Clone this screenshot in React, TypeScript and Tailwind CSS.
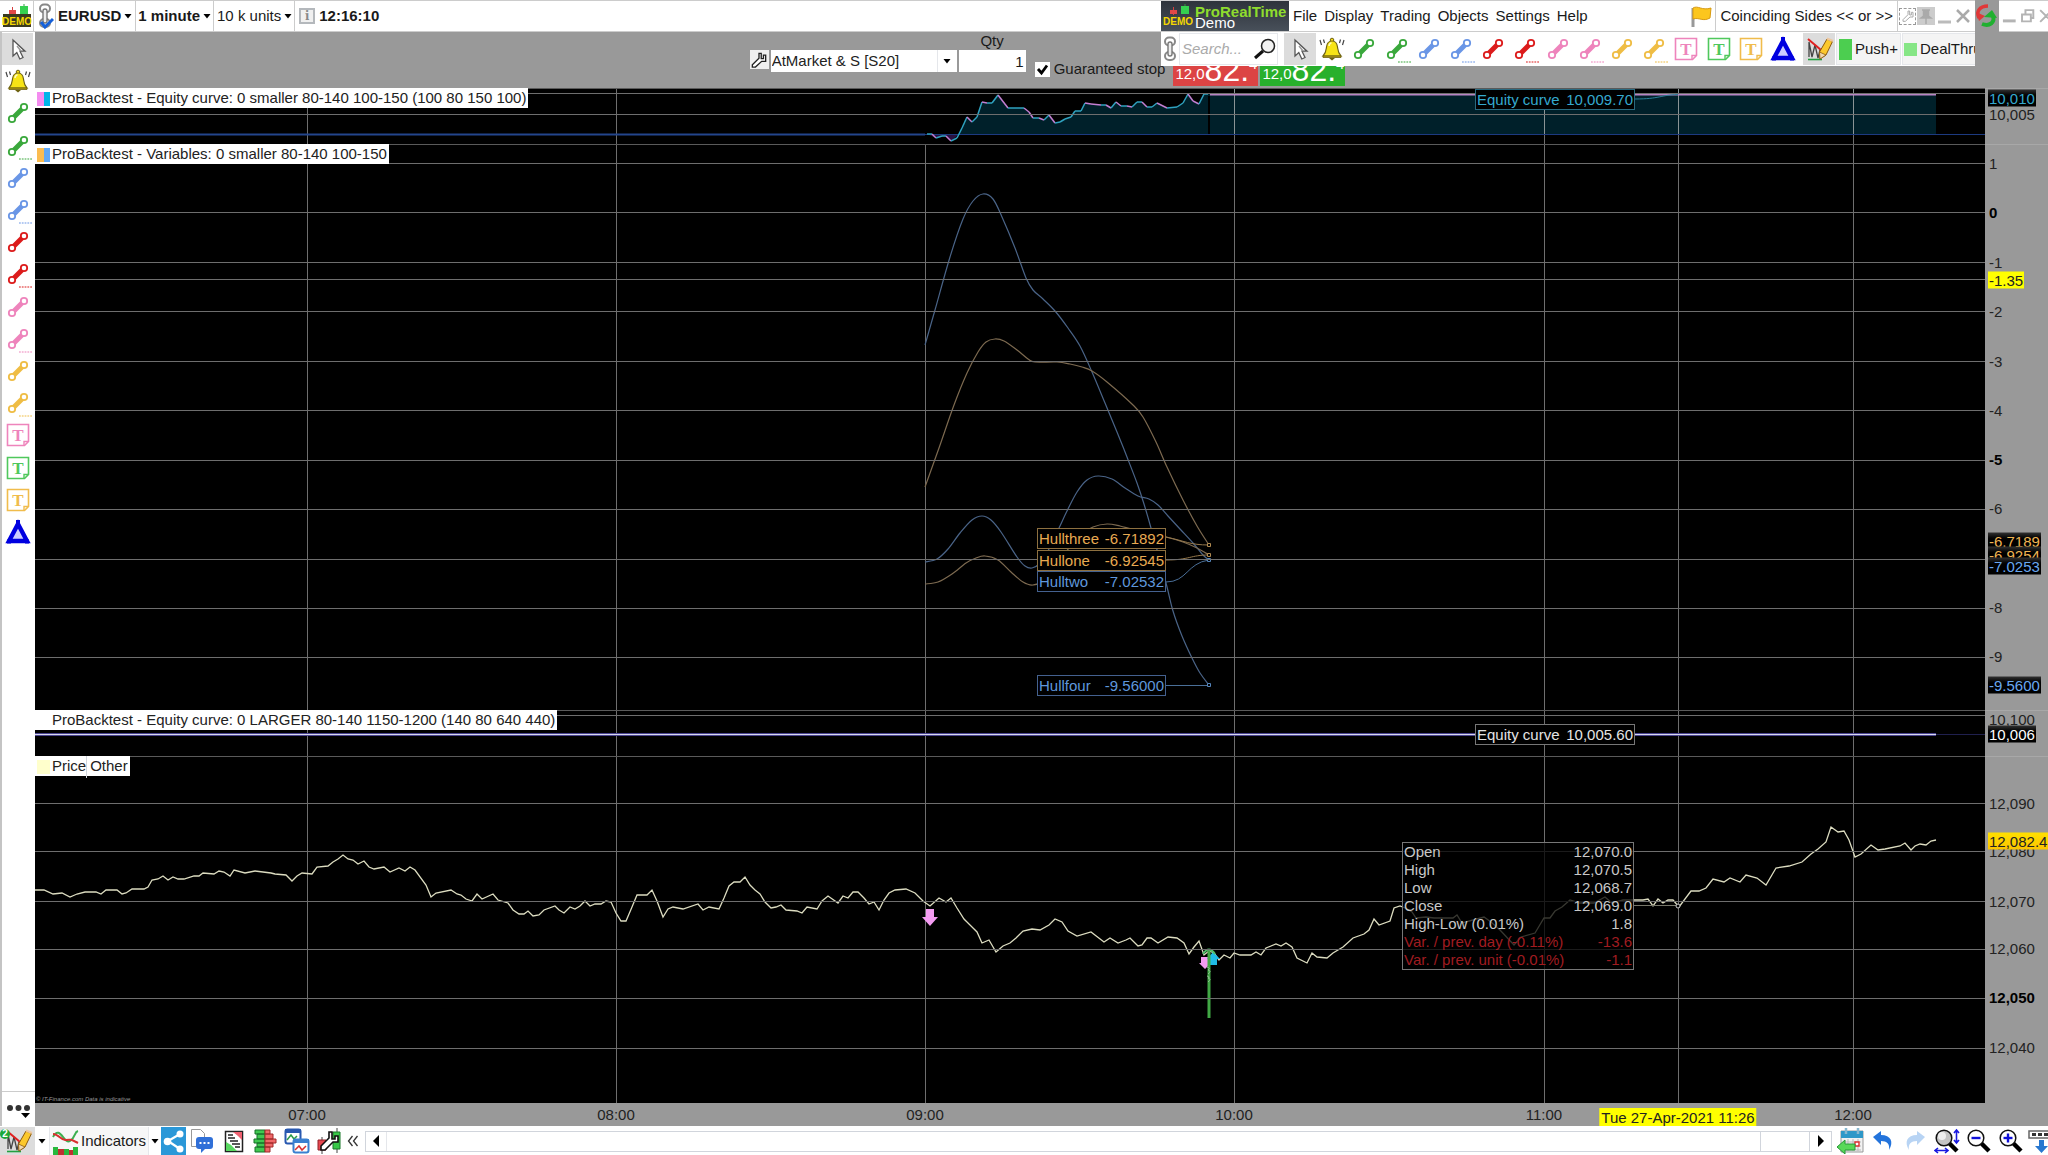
import React from "react";

const W = 1950;
const HOURS = [
  { label: "07:00", x: 272 },
  { label: "08:00", x: 581 },
  { label: "09:00", x: 890 },
  { label: "10:00", x: 1199 },
  { label: "11:00", x: 1509 },
  { label: "12:00", x: 1818 },
];
const CURSOR_X = 1643;

const PRICE =
  "0,134 9,134 18,138 27,137 35,141 42,138 50,136 61,136 66,138 71,134 82,134 87,138 91,137 97,133 109,133 113,131 117,124 123,123 128,120 133,124 138,121 143,123 149,123 159,120 164,120 168,117 179,118 184,115 189,116 195,120 199,114 210,117 220,115 236,117 240,118 251,119 257,125 262,120 267,117 277,118 282,111 293,110 298,106 303,103 308,99 313,103 318,104 323,108 329,105 334,111 339,113 349,111 355,116 364,112 370,115 375,111 380,114 391,129 396,141 401,137 416,134 422,138 426,139 431,143 437,145 442,138 447,143 458,138 463,144 473,147 478,154 484,158 489,158 493,155 498,160 504,159 509,154 520,150 524,154 529,157 535,151 540,153 545,150 550,145 555,150 560,148 566,148 571,145 576,146 581,157 586,165 591,165 597,151 602,139 612,139 617,134 622,145 628,161 633,153 638,151 648,153 663,148 668,154 674,151 684,153 689,142 694,130 699,126 705,126 710,121 715,129 720,134 725,138 730,146 736,152 741,151 746,149 751,154 762,155 767,157 772,151 782,153 787,145 793,140 803,147 808,140 813,142 818,136 823,136 829,142 834,148 839,146 844,154 849,144 854,137 860,134 871,133 880,137 888,145 895,150 904,142 911,146 916,142 922,152 929,163 935,169 942,176 947,187 954,184 961,196 968,190 975,187 981,182 988,175 997,173 1005,174 1014,169 1020,163 1027,166 1033,175 1042,180 1056,176 1069,186 1075,182 1083,187 1091,184 1095,182 1103,190 1107,189 1112,182 1116,182 1123,187 1133,181 1142,182 1149,187 1154,198 1159,191 1164,185 1169,199 1174,195 1179,197 1184,204 1189,199 1195,202 1199,197 1205,199 1216,199 1221,196 1226,199 1231,192 1241,188 1246,190 1251,187 1257,191 1262,202 1272,207 1277,197 1282,201 1292,202 1298,197 1308,191 1318,182 1329,178 1334,174 1339,163 1344,169 1355,165 1359,152 1365,150 1370,152 1377,156 1381,162 1391,161 1399,162 1418,162 1422,159 1427,167 1449,161 1456,166 1465,174 1479,189 1486,181 1500,177 1509,162 1515,162 1520,155 1527,151 1535,144 1545,147 1559,147 1570,141 1577,147 1588,144 1599,144 1608,144 1613,143 1618,150 1623,143 1628,147 1633,144 1638,144 1644,151 1656,135 1664,135 1671,132 1678,123 1689,126 1695,122 1705,126 1711,119 1722,122 1731,129 1741,112 1754,110 1767,106 1776,98 1783,93 1791,86 1796,71 1803,76 1809,75 1814,84 1820,101 1826,98 1836,89 1843,94 1850,93 1865,90 1870,87 1876,94 1880,90 1885,88 1891,89 1896,85 1901,84";

const EQUITY: number[][] = [
  [892, 46], [897, 46], [901, 50], [907, 48], [911, 48], [916, 53], [922, 50], [927, 40], [932, 29], [937, 34],
  [942, 29], [947, 14], [952, 15], [957, 15], [963, 7], [973, 20], [989, 20], [994, 24], [998, 30], [1004, 30],
  [1009, 32], [1014, 27], [1020, 35], [1025, 34], [1030, 31], [1036, 29], [1040, 23], [1046, 23], [1050, 15], [1056, 16],
  [1066, 17], [1071, 17], [1076, 20], [1081, 14], [1086, 18], [1092, 18], [1097, 19], [1102, 14], [1107, 14], [1112, 19],
  [1117, 19], [1122, 15], [1132, 20], [1142, 19], [1148, 15], [1153, 6], [1158, 13], [1164, 16], [1169, 6], [1173, 6],
];

const HULLS: { color: string; pts: number[][] }[] = [
  {
    color: "#4a6488",
    pts: [[890, 201], [900, 166], [915, 113], [928, 75], [938, 57], [948, 50], [958, 55], [967, 73], [980, 104], [991, 134], [998, 146], [1008, 155], [1020, 167], [1033, 184], [1045, 202], [1057, 228], [1070, 259], [1082, 288], [1092, 313], [1102, 339], [1109, 360], [1116, 384], [1131, 439], [1138, 467], [1147, 492], [1157, 514], [1165, 529], [1174, 541]],
  },
  {
    color: "#7d6a50",
    pts: [[890, 343], [904, 304], [919, 261], [932, 229], [943, 208], [951, 198], [960, 195], [969, 197], [982, 206], [993, 215], [1000, 218], [1022, 218], [1035, 220], [1047, 223], [1057, 227], [1072, 238], [1098, 261], [1108, 273], [1121, 298], [1132, 323], [1148, 356], [1162, 382], [1174, 401]],
  },
  {
    color: "#4a6488",
    pts: [[890, 418], [902, 415], [913, 405], [925, 389], [937, 376], [947, 372], [956, 376], [966, 388], [982, 413], [990, 422], [997, 424], [1004, 420], [1014, 405], [1024, 384], [1032, 367], [1042, 348], [1052, 336], [1063, 332], [1077, 335], [1090, 344], [1103, 352], [1114, 355], [1123, 361], [1133, 372], [1145, 385], [1158, 399], [1168, 411], [1174, 416]],
  },
  {
    color: "#7d6a50",
    pts: [[890, 440], [903, 438], [917, 430], [931, 419], [941, 414], [950, 412], [963, 416], [976, 428], [988, 438], [998, 441], [1010, 435], [1030, 409], [1045, 391], [1058, 383], [1072, 380], [1085, 382], [1100, 386], [1131, 393], [1148, 398], [1162, 404], [1174, 411]],
  },
];

// catmull-rom to bezier
const smooth = (p: number[][]) => {
  let d = `M${p[0][0]} ${p[0][1]}`;
  for (let i = 0; i < p.length - 1; i++) {
    const a = p[i - 1] || p[i];
    const b = p[i];
    const c = p[i + 1];
    const e = p[i + 2] || c;
    d += `C${b[0] + (c[0] - a[0]) / 6} ${b[1] + (c[1] - a[1]) / 6} ${c[0] - (e[0] - b[0]) / 6} ${c[1] - (e[1] - b[1]) / 6} ${c[0]} ${c[1]}`;
  }
  return d;
};

/* ---------- icons ---------- */

const Bone = ({ color, dots }: { color: string; dots?: boolean }) => (
  <svg viewBox="0 0 32 32" className="size-8 shrink-0">
    <path d="M10 22L22 10" stroke={color} strokeWidth="5" />
    <circle cx="10" cy="22" r="3.2" fill="#fff" stroke={color} strokeWidth="1.8" />
    <circle cx="22" cy="10" r="3.2" fill="#fff" stroke={color} strokeWidth="1.8" />
    {dots && <path d="M17 29h13" stroke={color} strokeWidth="1.2" strokeDasharray="1.8 1" />}
  </svg>
);

const Note = ({ color }: { color: string }) => (
  <svg viewBox="0 0 32 32" className="size-8 shrink-0">
    <path d="M5.500 5.500h21v17l-4 4h-17z" fill="#fff" stroke={color} strokeWidth="1.6" />
    <path d="M26 22.500h-4v4" fill="none" stroke={color} strokeWidth="1.4" />
    <text x="16" y="22" textAnchor="middle" fontFamily="Liberation Serif, serif" fontWeight="bold" fontSize="17" fill={color}>T</text>
  </svg>
);

const Arrow = () => (
  <svg viewBox="0 0 32 32" className="size-8 shrink-0">
    <path d="M11 7v16l3.800-3.500 3 6.500 3.200-1.500-3-6.300h5z" fill="#fff" stroke="#555" strokeWidth="1.300" />
    <path d="M15 13l4 5" stroke="#999" strokeWidth="1.500" />
  </svg>
);

const Bell = () => (
  <svg viewBox="0 0 32 32" className="size-8 shrink-0">
    <circle cx="16" cy="7" r="1.800" fill="#f4d91c" stroke="#6e6210" />
    <path d="M7 23c3-3 3-5 3.500-9 .5-4 3-6 5.500-6s5 2 5.500 6c.5 4 .5 6 3.500 9z" fill="#f7e416" stroke="#6e6210" strokeWidth="1.200" />
    <path d="M7 23h18v1.500H7z" fill="#b79f10" stroke="#6e6210" strokeWidth=".8" />
    <path d="M13 25h6l-3 2.500z" fill="#6e6210" />
    <path d="M13 13c.3-2 1.300-3 2.500-3" stroke="#fffbc0" strokeWidth="1.600" fill="none" />
    <path d="M4 7l1.500 5M7.500 6.500L8.500 10M28 7l-1.500 5M24.500 6.500L23.500 10" stroke="#444" strokeWidth="1.200" />
  </svg>
);

const Triangle = () => (
  <svg viewBox="0 0 32 32" className="size-8 shrink-0">
    <path d="M16 8L25 25H7z" fill="#ccccff" stroke="#0000e0" strokeWidth="4.400" />
    <path d="M14 4h4v4h-4zM5 23.500h4v4H5zM23 23.500h4v4h-4z" fill="#0000e0" />
  </svg>
);

const Pencil = () => (
  <svg viewBox="0 0 32 32" className="size-8 shrink-0">
    <path d="M6 24V9l3 15 3-12 3 13 2-8" fill="none" stroke="#444" strokeWidth="1.300" />
    <path d="M5 26.500h14" stroke="#22a040" strokeWidth="1.600" />
    <path d="M5 6l13 11" stroke="#e02020" strokeWidth="2" />
    <path d="M24 6l5.500 2.500L23 22l-6 4-.5-7z" fill="#fcc82c" stroke="#8a5a10" />
    <path d="M16.500 19l6.500 3-6 4z" fill="#f0d8b0" stroke="#8a5a10" strokeWidth=".8" />
    <path d="M24 5.500l6 2.500" stroke="#eec8a0" strokeWidth="2" />
  </svg>
);

const Chain = ({ check }: { check?: boolean }) => (
  <svg viewBox="0 0 18 28" className="h-7 w-[18px] shrink-0">
    <g fill="none" stroke="#888" strokeWidth="2">
      <rect x="4" y="2.500" width="10" height="8" rx="4" />
      <rect x="4" y="17" width="10" height="8" rx="4" />
    </g>
    <rect x="7" y="7" width="4" height="14" rx="2" fill="#eee" stroke="#777" strokeWidth="1.400" />
    {check && <path d="M5 20l4 5 8-8" fill="none" stroke="#1560d8" strokeWidth="3" />}
  </svg>
);

const DemoLogo = ({ box }: { box?: boolean }) => (
  <svg viewBox="0 0 30 24" className="h-6 w-[30px] shrink-0">
    <path d="M10.500 3v8" stroke="#d84040" />
    <path d="M7 6h7v4H7z" fill="#e04848" />
    <path d="M22 0v10" stroke="#30a040" />
    <path d="M18 2h8v8h-8z" fill="#35d050" />
    {box && <path d="M1 10h28v13H1z" fill="#3a3a20" />}
    <text x="15" y="21" textAnchor="middle" fontFamily="Liberation Sans, sans-serif" fontWeight="bold" fontSize="10" fill="#f5d800">DEMO</text>
  </svg>
);

const Caret = () => (
  <svg viewBox="0 0 8 5" className="h-[5px] w-2 shrink-0">
    <path d="M.5 0h7L4 4.500z" fill="#000" />
  </svg>
);

const Wrench = ({ className, stroke = "#222" }: { className?: string; stroke?: string }) => (
  <svg viewBox="0 0 18 18" className={className}>
    <path d="M9 1.500v5.500l-7.500 7.500v2.500h3.500L12 10.500h4.500V3.500h-2.500v4h-2.500v-6z" fill="#fff" stroke={stroke} strokeWidth="1.500" />
  </svg>
);

const Glass = ({ sign }: { sign?: "plus" | "minus" }) => (
  <svg viewBox="0 0 26 26" className="size-[26px] shrink-0">
    <path d="M15 15l8 8" stroke="#000" strokeWidth="4.500" />
    <circle cx="10" cy="10" r="7.800" fill={sign ? "#fff" : "#c4c4c4"} stroke="#111" strokeWidth="1.500" />
    {sign && <path d="M5.500 10h9" stroke="#1010d8" strokeWidth="2.400" />}
    {sign === "plus" && <path d="M10 5.500v9" stroke="#1010d8" strokeWidth="2.400" />}
    {!sign && (
      <>
        <circle cx="8" cy="8" r="4" fill="#eee" />
        <path d="M22.500 3v11M20 5l2.500-3L25 5M20 12l2.500 3 2.500-3M2 22.500h11M4 20l-3 2.500L4 25M11 20l3 2.500-3 2.500" fill="none" stroke="#1818e0" strokeWidth="1.600" />
      </>
    )}
  </svg>
);

const Search = () => (
  <svg viewBox="0 0 24 24" className="size-6 shrink-0">
    <path d="M10 14l-8 7" stroke="#111" strokeWidth="3" />
    <circle cx="15" cy="9" r="6.500" fill="#f2f2f2" stroke="#222" strokeWidth="1.500" />
  </svg>
);

const TOOLS = [
  { name: "Select", icon: <Arrow /> },
  { name: "Alert", icon: <Bell /> },
  { name: "Green line", icon: <Bone color="#3aa83c" /> },
  { name: "Green segment", icon: <Bone color="#3aa83c" dots /> },
  { name: "Blue line", icon: <Bone color="#6a96e6" /> },
  { name: "Blue segment", icon: <Bone color="#6a96e6" dots /> },
  { name: "Red line", icon: <Bone color="#dc1c1c" /> },
  { name: "Red segment", icon: <Bone color="#dc1c1c" dots /> },
  { name: "Pink line", icon: <Bone color="#ee84bc" /> },
  { name: "Pink segment", icon: <Bone color="#ee84bc" dots /> },
  { name: "Orange line", icon: <Bone color="#efbd45" /> },
  { name: "Orange segment", icon: <Bone color="#efbd45" dots /> },
  { name: "Pink note", icon: <Note color="#ee84bc" /> },
  { name: "Green note", icon: <Note color="#4fc85c" /> },
  { name: "Orange note", icon: <Note color="#f0bc4c" /> },
  { name: "Triangle", icon: <Triangle /> },
];

const Tools = () => (
  <>
    {TOOLS.map((t, i) => (
      <button key={t.name} aria-label={t.name} className={`flex flex-1 items-center justify-center ${i === 0 ? "bg-[#dcdcdc]" : ""}`}>
        {t.icon}
      </button>
    ))}
  </>
);

/* ---------- chart ---------- */

type Tick = { y: number; label?: string; bold?: boolean; at?: number };
type Tag = { y: number; label: string; style: string };

const TAG = "bg-linear-to-b from-[#333] via-black to-black";

const Pane = ({ h, ticks, tags, title, svg, from9, children }: {
  h: number;
  ticks: Tick[];
  tags: Tag[];
  title: React.ReactNode;
  svg: React.ReactNode;
  from9?: boolean;
  children?: React.ReactNode;
}) => (
  <section className="flex min-h-0 basis-0" style={{ flexGrow: h }}>
    <div className="relative min-w-0 flex-1 overflow-hidden bg-black">
      <svg viewBox={`0 0 ${W} ${h}`} preserveAspectRatio="none" className="absolute inset-0 size-full">
        {HOURS.map((t) => (
          <path key={t.x} d={`M${t.x + 0.5} 0V${h}`} stroke={from9 && t.x === 890 ? "none" : "#6e6e6e"} />
        ))}
        <path d={`M${CURSOR_X + 0.5} 0V${h}`} stroke="#6e6e6e" />
        {svg}
        {ticks.map((t) => (
          <path key={t.y} d={`M0 ${t.y + 0.5}H${W}`} stroke="#6e6e6e" />
        ))}
        <path d={`M0 .5H${W}`} stroke="#5a5a5a" />
      </svg>
      <div className="absolute left-0 top-0 flex h-5 items-center bg-white pt-px pr-0.5 text-[#222]">{title}</div>
      {children}
    </div>
    <div className="relative w-[63px] shrink-0 border-t border-[#a8a8a8] bg-[#999]">
      {ticks.map((t) =>
        t.label ? (
          <span key={t.y} className={`absolute left-1 -mt-px -translate-y-1/2 leading-[17px] ${t.bold ? "font-bold text-black" : "text-[#222]"}`} style={{ top: `${((t.at ?? t.y) / h) * 100}%` }}>
            {t.label}
          </span>
        ) : null
      )}
      {tags.map((t) => (
        <span key={t.label} className={`absolute left-[3px] -translate-y-1/2 pl-px pr-px leading-[17px] ${t.style}`} style={{ top: `${(t.y / h) * 100}%` }}>
          {t.label}
        </span>
      ))}
    </div>
  </section>
);

const Box = ({ x, y, h, w, style, name, value }: { x: number; y: number; h: number; w: string; style: string; name: string; value: string }) => (
  <div className={`absolute flex h-[21px] items-center justify-between border bg-black px-px pt-px ${w} ${style}`} style={{ left: `${(x / W) * 100}%`, top: `${(y / h) * 100}%` }}>
    <span>{name}</span>
    <span>{value}</span>
  </div>
);

const Swatch = ({ a, b }: { a: string; b: string }) => (
  <span className="mx-0.5 flex h-[14px] w-[13px] shrink-0">
    <i className={`flex-1 ${a}`} />
    <i className={`flex-1 ${b}`} />
  </span>
);

const area = `M924 46.500${EQUITY.slice(7).map((p) => `L${p[0]} ${p[1]}`).join("")}L1901 7V46.500Z`;

const QUOTE = [
  ["Open", "12,070.0"],
  ["High", "12,070.5"],
  ["Low", "12,068.7"],
  ["Close", "12,069.0"],
  ["High-Low (0.01%)", "1.8"],
  ["Var. / prev. day (-0.11%)", "-13.6"],
  ["Var. / prev. unit (-0.01%)", "-1.1"],
];

const Charts = () => (
  <div className="flex min-h-0 flex-1 flex-col">
    <Pane
      h={56}
      from9
      ticks={[{ y: 5 }, { y: 26, label: "10,005" }]}
      tags={[{ y: 9, label: "10,010", style: `${TAG} text-[#35a9cf]` }]}
      title={<><Swatch a="bg-[#f48cf0]" b="bg-[#00b4e8]" /><span>ProBacktest - Equity curve: 0 smaller 80-140 100-150 (100 80 150 100)</span></>}
      svg={
        <>
          <path d={area} fill="#00202a" />
          <path d="M892 46l9 4 10-2 5 5 8-7z" fill="#2a1040" />
          <path d="M1199.500 0V46M1509.500 0V46M1643.500 0V46M1818.500 0V46" stroke="#8a9496" />
          <path d="M1174 8V46" stroke="#000" strokeWidth="2" />
          <path d={`M0 46.500H${W}`} stroke="#1d3a80" />
          <path d="M0 46.500H890" stroke="#23458c" strokeWidth="2" />
          {EQUITY.slice(1).map((p, i) => (
            <path key={i} d={`M${EQUITY[i][0]} ${EQUITY[i][1]}L${p[0]} ${p[1]}`} stroke={p[1] > EQUITY[i][1] ? "#c47fd2" : "#2fa2bf"} strokeWidth="1.500" />
          ))}
          <path d="M1175 6.500H1901" stroke="#b884c4" strokeWidth="2" />
          <path d="M1600 11C1625 11 1625 7 1643 6.500" fill="none" stroke="#2a7f98" />
        </>
      }
    >
      <Box x={1440} y={1} h={56} w="w-[160px]" style="border-[#2a6a80] text-[#35a9cf]" name="Equity curve" value="10,009.70" />
    </Pane>

    <Pane
      h={566}
      ticks={[
        { y: 19, label: "1" },
        { y: 68, label: "0", bold: true },
        { y: 118, label: "-1" },
        { y: 135 },
        { y: 167, label: "-2" },
        { y: 217, label: "-3" },
        { y: 266, label: "-4" },
        { y: 316, label: "-5", bold: true },
        { y: 365, label: "-6" },
        { y: 415 },
        { y: 464, label: "-8" },
        { y: 513, label: "-9" },
      ]}
      tags={[
        { y: 135, label: "-1.35", style: "bg-[#ffff00] text-[#222]" },
        { y: 397, label: "-6.7189", style: `${TAG} text-[#f0b654]` },
        { y: 411, label: "-6.9254", style: `${TAG} text-[#f0b654]` },
        { y: 422, label: "-7.0253", style: `${TAG} text-[#6aa8f0]` },
        { y: 541, label: "-9.5600", style: `${TAG} text-[#6aa8f0]` },
      ]}
      title={<><Swatch a="bg-[#fbbc50]" b="bg-[#62a8f4]" /><span>ProBacktest - Variables: 0 smaller 80-140 100-150</span></>}
      svg={
        <g fill="none">
          {HULLS.map((s, i) => (
            <path key={i} d={smooth(s.pts)} stroke={s.color} strokeWidth="1.200" />
          ))}
          <path d="M1131 393C1150 397 1155 401 1174 401M1131 416C1155 416 1155 411 1174 411" stroke="#96794c" />
          <path d="M1131 438C1152 438 1152 419 1174 416M1131 541.500H1174" stroke="#4a6f98" />
          <path d="M1172.500 399.500h3v3h-3zM1172.500 409.500h3v3h-3z" fill="#000" stroke="#b08a50" />
          <path d="M1172.500 414.500h3v3h-3zM1172.500 539.500h3v3h-3z" fill="#000" stroke="#5585bb" />
        </g>
      }
    >
      <Box x={1002} y={384} h={566} w="w-[129px]" style="border-[#8d7040] text-[#e8aa52]" name="Hullthree" value="-6.71892" />
      <Box x={1002} y={406} h={566} w="w-[129px]" style="border-[#8d7040] text-[#e8aa52]" name="Hullone" value="-6.92545" />
      <Box x={1002} y={427} h={566} w="w-[129px]" style="border-[#44618f] text-[#5f97dc]" name="Hulltwo" value="-7.02532" />
      <Box x={1002} y={531} h={566} w="w-[129px]" style="border-[#44618f] text-[#5f97dc]" name="Hullfour" value="-9.56000" />
    </Pane>

    <Pane
      h={46}
      ticks={[{ y: 5, label: "10,100", at: 9 }]}
      tags={[{ y: 24, label: "10,006", style: `${TAG} text-white` }]}
      title={<><Swatch a="bg-white" b="bg-white" /><span>ProBacktest - Equity curve: 0 LARGER 80-140 1150-1200 (140 80 640 440)</span></>}
      svg={
        <>
          <path d={`M0 24.500H${W}`} stroke="#20204e" strokeWidth="1" />
          <path d="M0 24.500H1901" stroke="#4a4490" strokeWidth="3" />
          <path d="M0 24.500H1901" stroke="#d8d8ec" strokeWidth="1" />
        </>
      }
    >
      <Box x={1440} y={14} h={46} w="w-[160px]" style="border-[#777] text-[#e4e4e4]" name="Equity curve" value="10,005.60" />
    </Pane>

    <Pane
      h={347}
      ticks={[
        { y: 47, label: "12,090" },
        { y: 95, label: "12,080" },
        { y: 145, label: "12,070" },
        { y: 193, label: "12,060" },
        { y: 242, label: "12,050", bold: true },
        { y: 292, label: "12,040" },
      ]}
      tags={[{ y: 84, label: "12,082.4", style: "bg-linear-to-b from-[#ffe000] to-[#fcc400] text-[#222]" }]}
      title={
        <>
          <Swatch a="bg-[#ffffcc]" b="bg-[#ffffcc]" />
          <span className="border-r border-gray-300">Price</span>
          <span className="pl-[3px]">Other</span>
        </>
      }
      svg={
        <>
          <polyline points={PRICE} fill="none" stroke="#dcdcc0" strokeWidth="1.300" />
          <path d="M1599 149.500H1643" stroke="#77776a" />
          <circle cx="1643" cy="150" r="2" fill="#000" stroke="#ccc" />
          <path d="M891 153h8v8h4l-8 9-8-9h4z" fill="#f49cf2" />
          <path d="M1166 201h7v6h3l-6 6-6-6h2z" fill="#f49cf2" />
          <path d="M1175 209v-6h-3l6-7 7 7h-3v6z" fill="#20bce6" />
          <path d="M1168 198q6-9 12 0" fill="none" stroke="#4fc06a" strokeWidth="2" />
          <path d="M1174 195V262" stroke="#41a845" strokeWidth="3" />
          <path d="M1172 211q4 1 1 3 4 1 0 4M1172 220q4 1 1 2 4 1 0 4" fill="none" stroke="#8fbf90" />
        </>
      }
    >
      <table className="absolute w-[232px] border border-[#777] bg-black/75 text-[#c8c8c8]" style={{ left: `${(1367 / W) * 100}%`, top: `${(86 / 347) * 100}%` }}>
        <tbody>
          {QUOTE.map(([k, v], i) => (
            <tr key={k} className={`leading-[18px] ${i > 4 ? "text-[#a01c20]" : ""}`}>
              <th className="px-px text-left font-normal whitespace-nowrap">{k}</th>
              <td className="px-px text-right">{v}</td>
            </tr>
          ))}
        </tbody>
      </table>
      <small className="absolute bottom-px left-px text-[6px] leading-none text-[#999] italic">© IT-Finance.com Data is indicative</small>
    </Pane>
  </div>
);

const TimeAxis = () => (
  <div className="flex h-[23px] shrink-0 bg-[#999] text-[#222]">
    <div className="relative flex-1">
      {HOURS.map((t) => (
        <span key={t.label} className="absolute top-0.5 -translate-x-1/2 leading-5" style={{ left: `${(t.x / W) * 100}%` }}>
          {t.label}
        </span>
      ))}
      <span className="absolute top-[5px] -translate-x-1/2 bg-[#ffff00] px-0.5 pt-px leading-[17px] whitespace-nowrap" style={{ left: `${(CURSOR_X / W) * 100}%` }}>
        Tue 27-Apr-2021 11:26
      </span>
    </div>
    <div className="w-[63px]" />
  </div>
);

/* ---------- bars ---------- */

const Header = () => (
  <header className="flex h-8 shrink-0 items-center border-t border-b border-[#ccc] bg-white">
    <div className="flex h-full w-[34px] items-center justify-center border-r border-[#ccc]"><DemoLogo box /></div>
    <button aria-label="Link" className="flex h-full w-[22px] items-center justify-center border-r border-[#ccc]"><Chain check /></button>
    <button className="flex h-full items-center gap-[3px] border-r border-[#ccc] pr-[3px] pl-0.5 font-bold">EURUSD <Caret /></button>
    <button className="flex h-full items-center gap-[3px] border-r border-[#ccc] pr-0.5 pl-0.5 font-bold">1 minute <Caret /></button>
    <button className="flex h-full items-center gap-[3px] border-r border-[#ccc] pr-0.5 pl-[3px]">10 k units <Caret /></button>
    <span className="mr-1 ml-1 flex size-4 items-center justify-center border-2 border-[#b4b8bc] bg-[#f0f0f0] font-serif text-sm font-bold text-[#888]">i</span>
    <time className="font-bold">12:16:10</time>
    <svg viewBox="0 0 50 32" className="ml-auto h-8 w-[49px]" fill="none" stroke="#b4b4b4" strokeWidth="2">
      <path d="M4 21h13" strokeWidth="3" />
      <path d="M23.500 14.500h9v7h-9zM27 14v-4h8v8h-3M42 10l12 12M54 10L42 22" />
    </svg>
  </header>
);

const OrderBar = () => (
  <div className="flex h-14 shrink-0 items-start justify-center bg-[#999] pl-3">
    <button aria-label="Order settings" className="mt-[18px] flex size-[19px] items-center justify-center bg-[#f0f0f0]">
      <Wrench className="size-4" />
    </button>
    <label className="relative mt-[18px] ml-0.5 flex">
      <span className="sr-only">Strategy</span>
      <select className="h-[22px] w-[186px] appearance-none bg-white pl-px leading-5 text-[#222]">
        <option>AtMarket &amp; S [S20]</option>
      </select>
      <span className="pointer-events-none absolute inset-y-0 right-0 flex w-5 items-center justify-center border-l border-gray-200"><Caret /></span>
    </label>
    <label className="ml-0.5 flex w-[67px] flex-col text-center leading-[18px]">
      Qty
      <input defaultValue="1" className="h-[22px] w-full bg-white px-0.5 text-right" />
    </label>
    <label className="mt-7 ml-[9px] flex items-center gap-1 leading-[18px]">
      <span className="relative flex size-[15px]">
        <input type="checkbox" defaultChecked className="size-full appearance-none bg-white" />
        <svg viewBox="0 0 15 15" className="pointer-events-none absolute inset-0">
          <path d="M3 7l3.500 4L12 3.500" fill="none" stroke="#000" strokeWidth="2.800" />
        </svg>
      </span>
      Guaranteed stop
    </label>
    {["bg-[#dc4444]", "bg-[#28b02c]"].map((c, i) => (
      <button key={c} className={`flex h-[54px] w-[85px] items-end overflow-hidden pb-1 pl-0.5 text-white ${c} ${i ? "ml-0.5" : "ml-2"}`}>
        <span className="leading-[17px]">12,0</span>
        <span className="text-[32px] leading-[23px]">82.</span>
        <span className="mb-2.5 leading-4">4</span>
      </button>
    ))}
  </div>
);

const FloatingBar = () => (
  <div className="absolute top-0 right-[73px] flex h-[66px] w-[814px] flex-col overflow-hidden border-t border-[#ccc] bg-white">
    <div className="flex h-[31px] items-stretch border-b border-[#ccc]">
      <div className="flex w-[128px] shrink-0 items-center gap-0.5 bg-linear-to-b from-[#2e333b] to-[#48505a] pl-0.5">
        <DemoLogo />
        <div className="pt-0.5 text-[15px] leading-[11px] text-white">
          <b className="block text-[#8fdc2e]">ProRealTime</b>
          Demo
        </div>
      </div>
      <nav className="flex items-center gap-[7px] pl-1">
        {["File", "Display", "Trading", "Objects", "Settings", "Help"].map((m) => (
          <a key={m} href="#">{m}</a>
        ))}
      </nav>
      <div className="ml-auto flex items-center">
        <svg viewBox="0 0 26 26" className="size-[26px]">
          <path d="M4 5v19" stroke="#999" strokeWidth="3" />
          <path d="M4 5c5-3 9 3 18 0l-1 10c-7 4-11-1-17 1z" fill="#fcc61e" stroke="#d89a10" />
        </svg>
        <span className="flex h-full items-center border-x border-[#ccc] px-1 whitespace-nowrap">Coinciding Sides &lt;&lt; or &gt;&gt;</span>
        <span className="ml-px flex size-[17px] items-center justify-center border border-dashed border-[#999]"><Wrench className="size-3" stroke="#aaa" /></span>
        <svg viewBox="0 0 58 20" className="ml-px h-5 w-[58px]" fill="none">
          <path d="M0 1h18v18H0z" fill="#ccc" />
          <path d="M5 4h8M6.500 4v6L4 12h10l-2.500-2V4M9 12v6" fill="#aaa" stroke="#aaa" strokeWidth="1.500" />
          <path d="M21 16h13" stroke="#bbb" strokeWidth="3" />
          <path d="M40 4l12 12M52 4L40 16" stroke="#aaa" strokeWidth="2.500" />
        </svg>
      </div>
    </div>
    <div className="flex min-h-0 flex-1 items-stretch py-px">
      <div className="flex w-5 items-center"><Chain /></div>
      <label className="flex w-[100px] items-center border border-gray-200">
        <span className="sr-only">Search</span>
        <input placeholder="Search..." className="w-[73px] pl-0.5 italic placeholder:text-[#aaa]" />
        <Search />
      </label>
      <div className="ml-1.5 flex w-[515px] shrink-0 items-stretch"><Tools /></div>
      <button aria-label="Draw" className="ml-1 flex shrink-0 items-center bg-[#dcdcdc]"><Pencil /></button>
      <button className="ml-px flex shrink-0 items-center gap-[3px] border border-gray-200 bg-[#f4f4f4] px-0.5">
        <i className="h-[21px] w-[13px] bg-[#4cce50]" />Push+
      </button>
      <button className="ml-px flex shrink-0 items-center gap-[3px] border border-gray-200 bg-[#f4f4f4] px-px">
        <i className="size-[13px] bg-[#86e686]" />DealThru
      </button>
    </div>
  </div>
);

const Refresh = () => (
  <div className="absolute top-0 right-[49px] flex h-8 w-6 items-center bg-[#999]">
    <svg viewBox="0 0 24 32" className="h-8 w-6" fill="none">
      <path d="M13 6C4 6 1 12 4 18" stroke="#e03838" strokeWidth="3.500" />
      <path d="M1 12l3 9 6-5z" fill="#e03838" />
      <path d="M7 24c8 3 13-2 11-8" stroke="#20b030" strokeWidth="4" />
      <path d="M9 17l8-7 5 8z" fill="#20b030" />
    </svg>
  </div>
);

const BottomBar = () => (
  <footer className="flex h-[29px] shrink-0 items-center overflow-hidden bg-white pt-px">
    <button aria-label="Drawing" className="relative flex h-full w-[35px] shrink-0 items-center justify-center bg-[#dcdcdc]">
      <Pencil />
      <b className="absolute top-0.5 left-0 flex size-2.5 items-center justify-center rounded-full bg-[#1da838] text-[10px] leading-none text-white">2</b>
    </button>
    <span className="px-[3px]"><Caret /></span>
    <button className="flex h-full items-center gap-0.5 border-x border-gray-200 bg-[#f7f7f7] pr-0.5 pl-0.5">
      <svg viewBox="0 0 27 28" className="h-7 w-[27px]" fill="none">
        <path d="M1 10C8-3 12 18 18 14s4-9 8-10" stroke="#3cb050" strokeWidth="2" />
        <path d="M1 7c6 0 8 7 13 6s6 0 12 3" stroke="#d83030" strokeWidth="2" />
        <path d="M1 20h5v8H1zM12 22h5v6h-5zM21 20h5v8h-5z" fill="#28b83c" />
        <path d="M6 22h6v6H6zM17 23h4v5h-4z" fill="#c03030" />
      </svg>
      Indicators
    </button>
    <span className="px-0.5"><Caret /></span>
    <button aria-label="Share" className="flex h-full w-[25px] shrink-0 items-center justify-center bg-[#2b98d8]">
      <svg viewBox="0 0 24 24" className="size-6">
        <path d="M18 5L6 12l12 8" fill="none" stroke="#fff" strokeWidth="2.200" />
        <circle cx="18" cy="5" r="3.500" fill="#fff" />
        <circle cx="5.500" cy="12.500" r="3.800" fill="#fff" />
        <circle cx="18" cy="20" r="3.500" fill="#fff" />
      </svg>
    </button>
    <button aria-label="Chat" className="ml-1">
      <svg viewBox="0 0 24 26" className="h-[26px] w-6">
        <path d="M1.500 1.500h9l4 4v13h-13z" fill="#fff" stroke="#999" />
        <rect x="6" y="9" width="17" height="12" rx="3" fill="#3070d8" />
        <path d="M11 20v5l5-5z" fill="#3070d8" />
        <path d="M9.500 15h10" stroke="#fff" strokeWidth="2" strokeDasharray="2 2" />
      </svg>
    </button>
    <button aria-label="Report" className="ml-2.5">
      <svg viewBox="0 0 20 24" className="h-6 w-5">
        <path d="M1.500 2.500h17v20h-17z" fill="#fff" stroke="#222" strokeWidth="1.500" />
        <path d="M9 3h9v8l-4-4z" fill="#ee6070" />
        <path d="M2 13l5 3 6 6H2z" fill="#58d860" />
        <path d="M4 6h5M4 9h7M6 12h8M8 15h8M11 18h5" stroke="#222" strokeWidth="1.400" />
      </svg>
    </button>
    <button aria-label="Order book" className="ml-[9px]">
      <svg viewBox="0 0 24 24" className="size-6" strokeWidth="1">
        <path d="M2 1h10v4H2zM4 5h8v5H4zM1 10h11v4H1zM4 14h8v4H4zM2 18h10v5H2z" fill="#40c850" stroke="#157028" />
        <path d="M12 1h5v4h-5zM12 5h8v5h-8zM12 10h11v4H12zM12 14h8v4h-8zM12 18h5v5h-5z" fill="#f06868" stroke="#a02828" />
      </svg>
    </button>
    <button aria-label="Layouts" className="ml-[7px]">
      <svg viewBox="0 0 26 26" className="size-[26px]">
        <rect x="1.500" y="1.500" width="15" height="14" rx="2" fill="#fff" stroke="#2858b0" strokeWidth="2" />
        <path d="M1 1h16v4H1z" fill="#2858b0" />
        <path d="M3 12l4-5 3 4 3-3" fill="none" stroke="#2a9a48" strokeWidth="1.500" />
        <rect x="9.500" y="11.500" width="15" height="13" rx="2" fill="#fff" stroke="#3a80d0" strokeWidth="2" />
        <path d="M9 11h16v4H9z" fill="#3a80d0" />
        <path d="M11 22l4-4 3 4 4-4" fill="none" stroke="#d83030" strokeWidth="1.500" />
      </svg>
    </button>
    <button aria-label="Trading settings" className="ml-[7px]">
      <svg viewBox="0 0 24 26" className="h-[26px] w-6">
        <path d="M5 9v17M20 0v25" stroke="#444" />
        <path d="M1 12h8v10H1z" fill="#e84850" stroke="#902028" />
        <path d="M16 4h7v17h-7z" fill="#38c848" stroke="#187828" />
        <path d="M12 4v6l-8 8v4h4l8-8h5V8h-3v3h-3V4z" fill="#fff" stroke="#111" strokeWidth="1.600" />
      </svg>
    </button>
    <button aria-label="Collapse" className="mx-1.5">
      <svg viewBox="0 0 12 12" className="size-3" fill="none" stroke="#333" strokeWidth="1.300">
        <path d="M5.500 1L1.500 6l4 5M10.500 1l-4 5 4 5" />
      </svg>
    </button>
    <div className="flex h-[21px] min-w-0 flex-1 border border-gray-300">
      <button aria-label="Scroll left" className="flex w-[21px] items-center justify-center border-r border-gray-200">
        <svg viewBox="0 0 6 12" className="h-3 w-1.5"><path d="M6 0v12L0 6z" /></svg>
      </button>
      <div className="flex-1" />
      <div className="w-[50px] border-x border-gray-300" />
      <button aria-label="Scroll right" className="flex w-[21px] items-center justify-center">
        <svg viewBox="0 0 6 12" className="h-3 w-1.5"><path d="M0 0v12l6-6z" /></svg>
      </button>
    </div>
    <div className="flex w-[216px] shrink-0 items-center pl-1">
      <svg viewBox="0 0 28 26" className="h-[26px] w-7 shrink-0">
        <path d="M5 3h22v21H5z" fill="#f2f2f2" stroke="#999" />
        <path d="M5 3h22v7H5z" fill="#2f98c8" />
        <path d="M10 0v6M22 0v6" stroke="#88b8d0" strokeWidth="2.500" />
        <path d="M8 14h17M8 18h17M8 22h17M12 11v12M17 11v12M22 11v12" stroke="#bbb" />
        <path d="M19 14h4v4h-4z" fill="#fff" stroke="#e03030" strokeWidth="1.400" />
        <path d="M1 19l8-7v4h10v6H9v4z" fill="#58d858" stroke="#289838" />
      </svg>
      <svg viewBox="0 0 22 22" className="ml-2 size-[22px] shrink-0">
        <path d="M1 7l8-6v4c10 0 13 7 8 15 1-6-2-9-8-9v4z" fill="#2474dc" />
      </svg>
      <svg viewBox="0 0 22 22" className="ml-2.5 size-[22px] shrink-0">
        <path d="M21 7l-8-6v4C3 5 0 12 5 20c-1-6 2-9 8-9v4z" fill="#b8d4f4" />
      </svg>
      <span className="ml-2 flex gap-1.5">
        <Glass />
        <Glass sign="minus" />
        <Glass sign="plus" />
      </span>
      <svg viewBox="0 0 26 26" className="ml-1 h-[26px] w-[26px] shrink-0">
        <path d="M1 3h25v7H1z" fill="#fff" stroke="#666" strokeWidth="1.500" />
        <path d="M4 6.500h20" stroke="#333" strokeWidth="3" strokeDasharray="4 2" />
        <path d="M11 12h5v6h4l-6.500 7-6.500-7h4z" fill="#2878d0" />
      </svg>
    </div>
  </footer>
);

const App = () => {
  return (
    <div className="relative flex h-screen w-full flex-col overflow-hidden bg-[#999] font-['Liberation_Sans',Arial,sans-serif] text-[15px] text-[#1a1a1a]">
      <Header />
      <div className="flex min-h-0 flex-1">
        <aside className="flex w-[35px] shrink-0 flex-col border-l-2 border-[#c4c4c4] bg-white pt-px">
          <div className="flex h-[515px] flex-col pr-0.5"><Tools /></div>
          <button aria-label="More" className="mt-auto flex h-[35px] items-center justify-center border-t border-[#ccc]">
            <svg viewBox="0 0 28 18" className="h-[18px] w-7">
              <path d="M16 13h9l-4.500 5z" fill="#000" />
              <circle cx="5" cy="8" r="3" fill="#333" />
              <circle cx="13.500" cy="8" r="3" fill="#333" />
              <circle cx="22" cy="8" r="3" fill="#333" />
            </svg>
          </button>
        </aside>
        <main className="flex min-w-0 flex-1 flex-col">
          <OrderBar />
          <Charts />
          <TimeAxis />
        </main>
      </div>
      <BottomBar />
      <FloatingBar />
      <Refresh />
    </div>
  );
};

export default App;
